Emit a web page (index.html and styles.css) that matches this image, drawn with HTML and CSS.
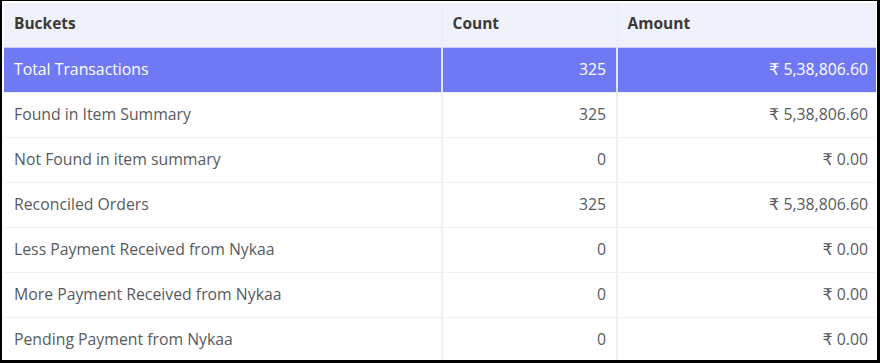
FILE: index.html
```html
<!DOCTYPE html>
<html>
<head>
<meta charset="utf-8">
<link rel="stylesheet" href="styles.css">
</head>
<body>
<div class="frame">
  <table class="buckets">
    <thead>
      <tr><th class="c1">Buckets</th><th class="c2">Count</th><th class="c3">Amount</th></tr>
    </thead>
    <tbody>
      <tr class="total"><td>Total Transactions</td><td class="num">325</td><td class="num"><span class="rs">₹</span> 5,38,806.60</td></tr>
      <tr><td>Found in Item Summary</td><td class="num">325</td><td class="num"><span class="rs">₹</span> 5,38,806.60</td></tr>
      <tr><td>Not Found in item summary</td><td class="num">0</td><td class="num"><span class="rs">₹</span> 0.00</td></tr>
      <tr><td>Reconciled Orders</td><td class="num">325</td><td class="num"><span class="rs">₹</span> 5,38,806.60</td></tr>
      <tr><td>Less Payment Received from Nykaa</td><td class="num">0</td><td class="num"><span class="rs">₹</span> 0.00</td></tr>
      <tr><td>More Payment Received from Nykaa</td><td class="num">0</td><td class="num"><span class="rs">₹</span> 0.00</td></tr>
      <tr><td>Pending Payment from Nykaa</td><td class="num">0</td><td class="num"><span class="rs">₹</span> 0.00</td></tr>
    </tbody>
  </table>
</div>
</body>
</html>
```
FILE: styles.css
```css
html, body {
  margin: 0;
  padding: 0;
  background: #ffffff;
}
.frame {
  box-sizing: border-box;
  width: 880px;
  height: 363px;
  border-style: solid;
  border-color: #000;
  border-width: 1px 3px 3px 2px;
  padding: 2px 1px 0 2px;
  overflow: hidden;
  background: #fff;
}
.buckets {
  width: 872px;
  border-collapse: collapse;
  table-layout: fixed;
  font-family: "Open Sans", "Noto Sans", sans-serif;
  font-size: 15.8px;
  color: #575b60;
}
.c1 { width: 438px; }
.c2 { width: 175px; }
.c3 { width: auto; }
th {
  background: #eff2fa;
  color: #3d3a36;
  font-weight: 700;
  font-size: 15.5px;
  text-align: left;
  height: 44px;
  padding: 0 10px 4px;
  box-sizing: border-box;
  border-left: 1px solid #e6eaf3;
  vertical-align: middle;
}
th:first-child { border-left: none; }
td {
  height: 45px;
  box-sizing: border-box;
  padding: 0 10px 1px;
  border-top: 1px solid #edf0f7;
  border-left: 2px solid #edf0f7;
  vertical-align: middle;
  white-space: nowrap;
  line-height: 22px;
}
td:first-child { border-left: none; }
td.num { text-align: right; }
td.num:last-child { padding-right: 8px; }
.rs {
  display: inline-block;
  font-family: "DejaVu Sans", sans-serif;
  font-size: 16px;
  line-height: 1;
}
tr.total td {
  background: #7079f4;
  color: #ffffff;
  border-top: 1px solid #c9cdfb;
  border-left: 2px solid #dfe2fd;
}
tr.total td:first-child { border-left: none; }
```
